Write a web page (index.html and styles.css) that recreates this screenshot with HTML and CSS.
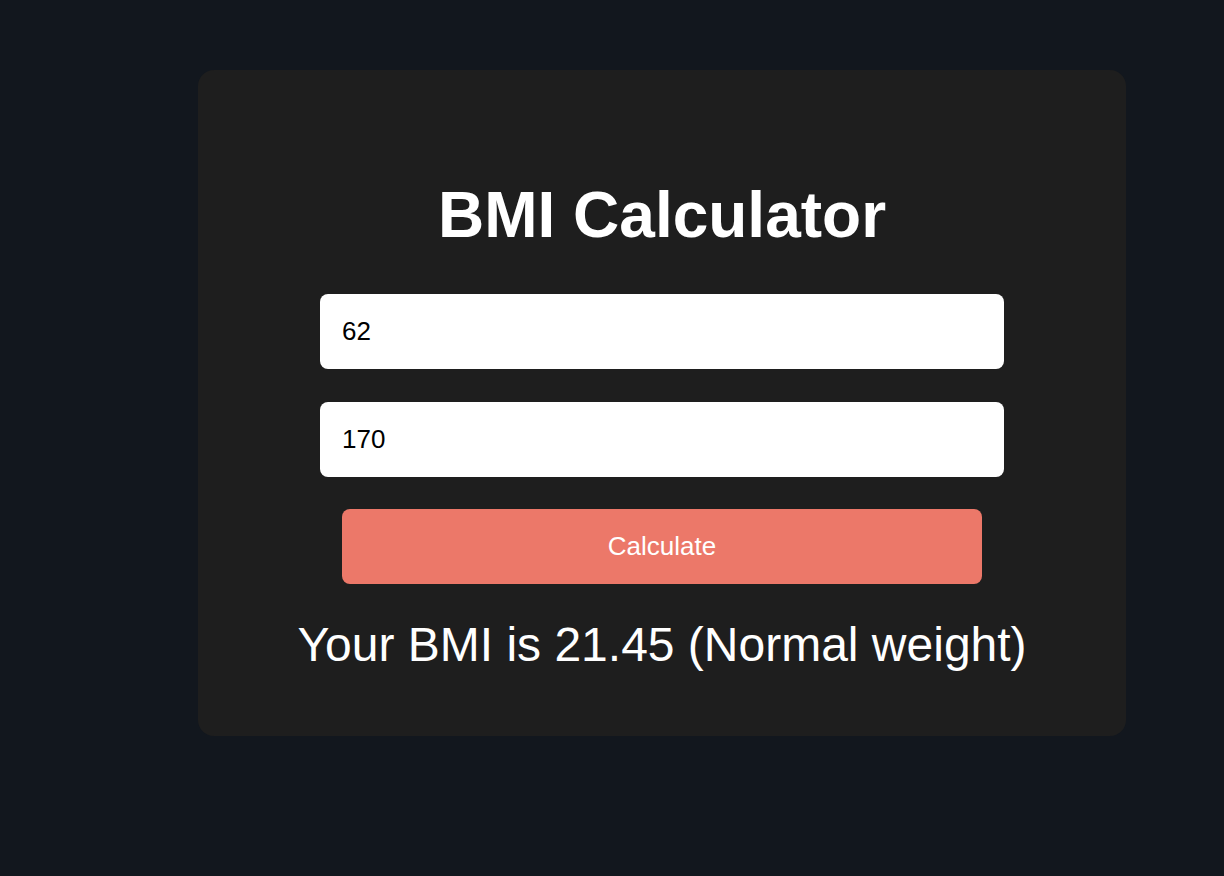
FILE: index.html
```html
<!DOCTYPE html>
<html lang="en">
<head>
<meta charset="utf-8">
<title>BMI Calculator</title>
<link rel="stylesheet" href="styles.css">
</head>
<body>
<main class="card">
  <h1 class="title">BMI Calculator</h1>
  <form class="form">
    <input class="field" type="text" value="62" aria-label="Weight (kg)">
    <input class="field" type="text" value="170" aria-label="Height (cm)">
    <button class="btn" type="button">Calculate</button>
  </form>
  <p class="result">Your BMI is 21.45 (Normal weight)</p>
</main>
</body>
</html>
```
FILE: styles.css
```css
html, body {
  margin: 0;
  padding: 0;
  background: #12171e;
  height: 100%;
}
body {
  font-family: "Liberation Sans", Arial, Helvetica, sans-serif;
  color: #ffffff;
  padding: 70px 98px 0 198px;
  box-sizing: border-box;
}
.card {
  background: #1e1e1e;
  border-radius: 16px;
  width: 928px;
  box-sizing: border-box;
  padding: 64px 64px 64px;
  display: flex;
  flex-direction: column;
  align-items: center;
}
.title {
  font-size: 64px;
  line-height: 74px;
  font-weight: 700;
  margin: 44px 0 42px;
  text-align: center;
}
.form {
  display: flex;
  flex-direction: column;
  align-items: center;
  gap: 33px;
  width: 100%;
}
.field {
  width: 684px;
  height: 75px;
  box-sizing: border-box;
  border: none;
  border-radius: 8px;
  background: #ffffff;
  color: #000000;
  font-family: "Liberation Sans", Arial, Helvetica, sans-serif;
  font-size: 26px;
  padding: 0 22px;
  outline: none;
}
.form .btn {
  margin-top: -1px;
}
.btn {
  width: 640px;
  height: 75px;
  border: none;
  border-radius: 8px;
  background: #ec7869;
  color: #ffffff;
  font-family: "Liberation Sans", Arial, Helvetica, sans-serif;
  font-size: 26px;
  cursor: pointer;
}
.result {
  font-size: 48px;
  line-height: 55px;
  margin: 33px 0 0;
  text-align: center;
}
```
